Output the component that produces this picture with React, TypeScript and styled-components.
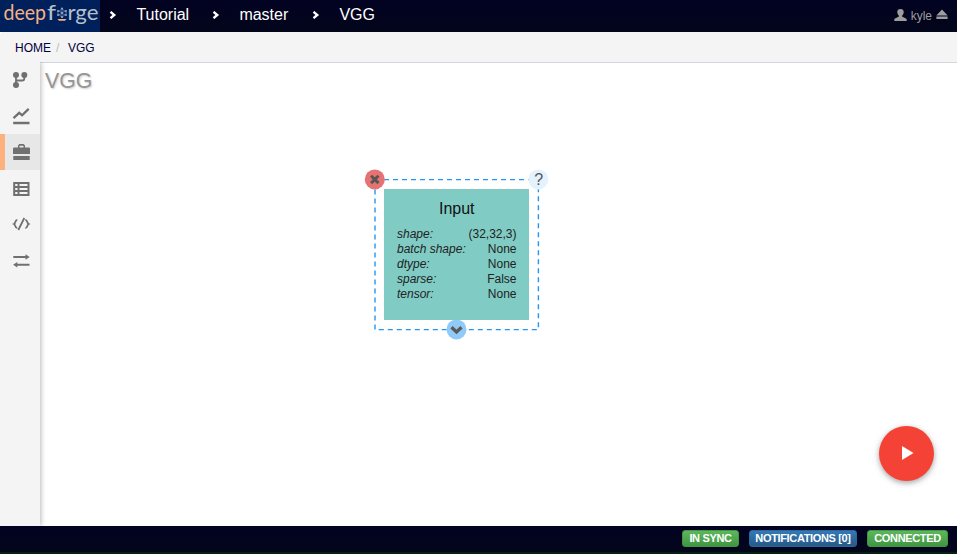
import React from "react";
import styled, { createGlobalStyle } from "styled-components";

const GlobalStyle = createGlobalStyle`
  * { box-sizing: border-box; }
  body {
    margin: 0;
    overflow: hidden;
    background: #fff;
    font-family: "Liberation Sans", Arial, sans-serif;
  }
`;

const Page = styled.div`
  display: flex;
  flex-direction: column;
  height: 554px;
`;

const Header = styled.header`
  display: flex;
  align-items: center;
  height: 32px;
  flex: none;
  background: linear-gradient(#020222, #03061b);
  color: #fff;
`;

const Logo = styled.svg`
  display: block;
  width: 100px;
  height: 32px;
  flex: none;
  background: #00205b;
`;

const Chevron = styled.svg<{ $left: number }>`
  width: 8px;
  height: 8px;
  flex: none;
  margin: 0 0 2px ${(p) => p.$left}px;
`;

const Crumb = styled.a<{ $width: number }>`
  margin-left: 19px;
  width: ${(p) => p.$width}px;
  font-size: 16px;
  line-height: 20px;
  padding-bottom: 3px;
  white-space: nowrap;
`;

const User = styled.div`
  display: flex;
  align-items: center;
  gap: 4px;
  margin: 0 9px 2px auto;
  color: #9d9d9d;
  font-size: 12px;
  line-height: 16px;
  svg { display: block; }
  span { padding-top: 2px; }
`;

const Breadcrumb = styled.nav`
  display: flex;
  align-items: center;
  height: 30px;
  flex: none;
  padding: 1px 0 0 15px;
  border-top-left-radius: 4px;
  background: #f4f4f4;
  font-size: 12px;
  color: #00003c;
`;

const Slash = styled.span`
  width: 17px;
  padding-left: 5px;
  color: #bbb;
`;

const Body = styled.div`
  display: flex;
  flex: 1;
  min-height: 0;
`;

const Sidebar = styled.aside`
  width: 40px;
  flex: none;
  background: #f4f4f4;
  box-shadow: 1px 0 5px rgba(0, 0, 0, 0.28);
  z-index: 1;
  clip-path: inset(0 -10px 0 0);
`;

const SideItem = styled.div<{ $active?: boolean }>`
  height: 36px;
  background: ${(p) => (p.$active ? "#e7e7e7" : "transparent")};
  box-shadow: ${(p) => (p.$active ? "inset 5px 0 #ffb07f" : "none")};
  svg { display: block; }
`;

const Canvas = styled.main`
  position: relative;
  flex: 1;
  border-top: 1px solid #d0d7de;
  background: #fff;
`;

const Title = styled.h1`
  margin: 5px 0 0 5px;
  font-size: 21.3px;
  line-height: 26px;
  font-weight: 400;
  color: #969696;
  text-shadow: 1px 1px 2px rgba(0, 0, 0, 0.2);
`;

const Node = styled.section`
  position: absolute;
  left: 334px;
  top: 116px;
  width: 165px;
  height: 152px;
  padding: 10px;
`;

const Overlay = styled.svg`
  position: absolute;
  left: -10px;
  top: -10px;
`;

const Card = styled.div`
  width: 145px;
  height: 131px;
  padding: 10px 12.5px 0 13px;
  background: #80cbc4;
  color: #111;
`;

const NodeName = styled.div`
  font-size: 16px;
  line-height: 20px;
  text-align: center;
  margin-bottom: 8px;
`;

const Attribute = styled.div`
  display: flex;
  justify-content: space-between;
  height: 15px;
  font-size: 12px;
  line-height: 15px;
  color: #222;
`;

const RunButton = styled.button`
  position: absolute;
  right: 23px;
  bottom: 45px;
  width: 55px;
  height: 55px;
  padding: 0;
  border: 0;
  border-radius: 50%;
  background: #f44336;
  box-shadow: 0 2px 5px rgba(0, 0, 0, 0.26), 0 2px 8px rgba(0, 0, 0, 0.12);
  svg { display: block; }
`;

const Footer = styled.footer`
  display: flex;
  justify-content: flex-end;
  gap: 10px;
  height: 28px;
  flex: none;
  padding: 4px 9px 0 0;
  background: linear-gradient(#020222, #03061b);
  border-bottom: 2px solid #04200f;
`;

const Badge = styled.span<{ $width: number; $blue?: boolean }>`
  width: ${(p) => p.$width}px;
  height: 17px;
  border-radius: 3px;
  border: 1px solid ${(p) => (p.$blue ? "#2b669a" : "#419641")};
  background: ${(p) =>
    p.$blue ? "linear-gradient(#337ab7, #265a88)" : "linear-gradient(#5cb85c, #419641)"};
  color: #fff;
  font-size: 11px;
  font-weight: 700;
  letter-spacing: -0.35px;
  line-height: 15px;
  text-align: center;
  white-space: nowrap;
`;

const DeepForgeLogo = () => (
  <Logo viewBox="0 0 100 32">
    <g fontFamily="Lato, sans-serif" fontSize="20.5">
      <text x="3.5" y="19.5" fill="#f5b183" textLength="42.5" lengthAdjust="spacingAndGlyphs">deep</text>
      <text x="47" y="19.5" fill="#b5bfcb" textLength="9" lengthAdjust="spacingAndGlyphs">f</text>
      <text x="67.5" y="19.5" fill="#b5bfcb" textLength="31" lengthAdjust="spacingAndGlyphs">rge</text>
    </g>
    <path
      d="M62 8.500 66.500 13 62 17.500 57.500 13ZM62 8v10M58.500 10.500l7 5M65.500 10.500l-7 5"
      fill="none"
      stroke="#7e9bc0"
      strokeWidth="0.7"
    />
    <g fill="#9fb5cf">
      {[[62, 8.5], [58, 11], [66, 11], [58, 15], [66, 15], [62, 13], [62, 17]].map(([x, y]) => (
        <circle key={`${x}-${y}`} cx={x} cy={y} r="0.9" />
      ))}
    </g>
    <path d="M57.500 19h9l-1.500 1.800h-6z" fill="#f5b183" />
  </Logo>
);

const Arrow = ({ left }: { left: number }) => (
  <Chevron $left={left} viewBox="0 0 8 8">
    <path d="M1.500 .8 5.300 4 1.500 7.200" fill="none" stroke="#fff" strokeWidth="2.3" />
  </Chevron>
);

const icons = [
  <>
    <g fill="#707070"><circle cx="16" cy="13" r="3" /><circle cx="24.3" cy="13" r="3" /><circle cx="16" cy="23" r="3" /></g>
    <path d="M16 13v10M24.3 13v3.5q0 2-2 2H16" fill="none" stroke="#707070" strokeWidth="1.8" />
  </>,
  <path d="m13.500 20.200 5.700-5.400 2.900 2.500 6.600-6.400M13.200 25h16.300" fill="none" stroke="#707070" strokeWidth="2.3" />,
  <path fill="#707070" d="M14.3 13.5H18v-2l1.3-1.5h4.4l1.3 1.5v2h3.7q1.3 0 1.3 1.3V20H13v-5.200q0-1.3 1.3-1.3ZM19.5 13.5h4v-1.8h-4zM13.3 22h16.4v4H13.3z" />,
  <path d="M14.2 13h14.300v12H14.200zM14 17h14M14 21h14M18.500 13v12" fill="none" stroke="#707070" strokeWidth="2" />,
  <path d="M17.300 13.800c-2.400 0-1.600 3.400-3.300 4.200 1.700.8.900 4.200 3.300 4.200M25.300 13.800c2.400 0 1.600 3.400 3.300 4.200-1.700.8-.9 4.200-3.300 4.200M24.300 12l-6 12" fill="none" stroke="#707070" strokeWidth="1.8" />,
  <>
    <path d="M13.3 15H27M16 22.8h13.500" stroke="#707070" strokeWidth="2" />
    <path d="m25.500 12.200 4.200 2.800-4.200 2.800zM17.300 20l-4.200 2.800 4.200 2.800z" fill="#707070" />
  </>,
];

const attributes = [
  ["shape:", "(32,32,3)"],
  ["batch shape:", "None"],
  ["dtype:", "None"],
  ["sparse:", "False"],
  ["tensor:", "None"],
];

export default function App() {
  return (
    <Page>
      <GlobalStyle />
      <Header>
        <DeepForgeLogo />
        <Arrow left={9.4} />
        <Crumb $width={58}>Tutorial</Crumb>
        <Arrow left={18} />
        <Crumb $width={53}>master</Crumb>
        <Arrow left={20} />
        <Crumb $width={40}>VGG</Crumb>
        <User>
          <svg width="13" height="12" viewBox="0 0 13 12">
            <path fill="currentColor" d="M6.5 0C8.600 0 9.900 1.200 9.700 3.400 9.500 5 8.800 5.800 8.200 6.500v1.100c0 .8 4.300 1.200 4.500 3V12H.3v-1.400c.2-1.800 4.500-2.200 4.500-3V6.500C4.200 5.800 3.500 5 3.300 3.400 3.100 1.200 4.400 0 6.500 0Z" />
          </svg>
          <span>kyle</span>
          <svg width="12" height="12" viewBox="0 0 12 12">
            <path fill="currentColor" d="M6 .5 11.700 6.500H.3zM.4 7.500h11.200v2.500H.4z" />
          </svg>
        </User>
      </Header>
      <Breadcrumb>
        <span>HOME</span>
        <Slash>/</Slash>
        <span>VGG</span>
      </Breadcrumb>
      <Body>
        <Sidebar>
          {icons.map((icon, i) => (
            <SideItem key={i} $active={i === 2}>
              <svg width="40" height="36" viewBox="0 0 40 36">{icon}</svg>
            </SideItem>
          ))}
        </Sidebar>
        <Canvas>
          <Title>VGG</Title>
          <Node>
            <Overlay width="185" height="172" viewBox="0 0 185 172">
              <path d="M11 10.600H174.400V160.600H11Z" fill="none" stroke="#2196f3" strokeWidth="1.400" strokeDasharray="5 4" />
              <circle cx="10.800" cy="10.400" r="10" fill="#e57373" />
              <path d="m7.100 6.700 7.400 7.400M14.500 6.700l-7.400 7.400" stroke="#5b5552" strokeWidth="3" />
              <circle cx="174.300" cy="10.400" r="10" fill="#e3f2fd" />
              <text x="174.700" y="16" textAnchor="middle" fontSize="16" fill="#555">?</text>
              <circle cx="92.500" cy="160.400" r="10" fill="#90caf9" />
              <path d="m87.500 158.300 5 4.700 5-4.700" fill="none" stroke="#5a5a5a" strokeWidth="3.300" />
            </Overlay>
            <Card>
              <NodeName>Input</NodeName>
              {attributes.map(([name, value]) => (
                <Attribute key={name}>
                  <em>{name}</em>
                  <span>{value}</span>
                </Attribute>
              ))}
            </Card>
          </Node>
          <RunButton aria-label="Run">
            <svg width="55" height="55" viewBox="0 0 55 55">
              <path d="M23 20v14l11.500-7z" fill="#fff" />
            </svg>
          </RunButton>
        </Canvas>
      </Body>
      <Footer>
        <Badge $width={57}>IN SYNC</Badge>
        <Badge $width={108} $blue>NOTIFICATIONS [0]</Badge>
        <Badge $width={81}>CONNECTED</Badge>
      </Footer>
    </Page>
  );
}
